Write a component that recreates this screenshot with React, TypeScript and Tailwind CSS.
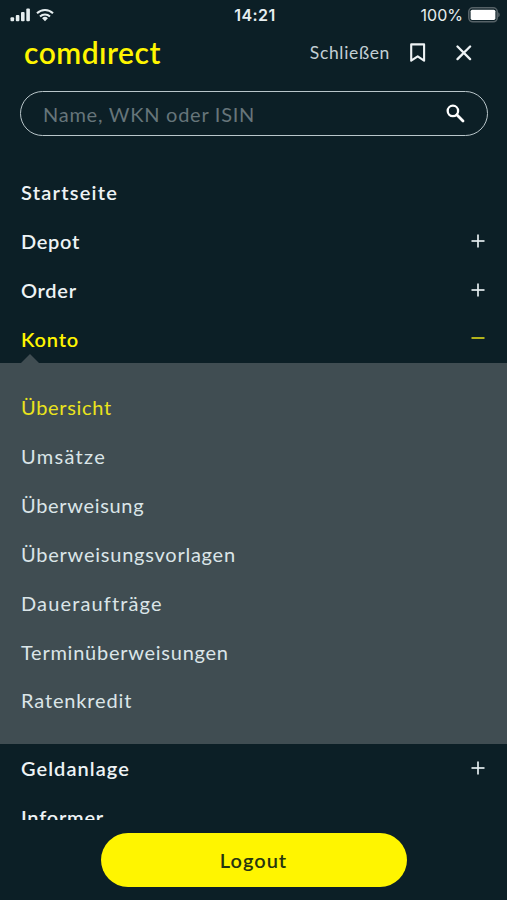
import { useState } from 'react'

type MenuItem = {
  label: string
  tracking: string
  children?: { label: string; tracking: string }[]
  expandable?: boolean
}

const MENU: MenuItem[] = [
  { label: 'Startseite', tracking: 'tracking-[1.25px]' },
  { label: 'Depot', tracking: 'tracking-[0.7px]', expandable: true },
  { label: 'Order', tracking: 'tracking-[0.7px]', expandable: true },
  {
    label: 'Konto',
    tracking: 'tracking-[0.8px]',
    expandable: true,
    children: [
      { label: 'Übersicht', tracking: 'tracking-[0.67px]' },
      { label: 'Umsätze', tracking: 'tracking-[1.3px]' },
      { label: 'Überweisung', tracking: 'tracking-[0.67px]' },
      { label: 'Überweisungsvorlagen', tracking: 'tracking-[0.76px]' },
      { label: 'Daueraufträge', tracking: 'tracking-[1.14px]' },
      { label: 'Terminüberweisungen', tracking: 'tracking-[0.74px]' },
      { label: 'Ratenkredit', tracking: 'tracking-[0.86px]' },
    ],
  },
  { label: 'Geldanlage', tracking: 'tracking-[1.05px]', expandable: true },
  { label: 'Informer', tracking: 'tracking-[0.75px]' },
]

function StatusBar() {
  return (
    <div className="h-[30px] shrink-0 grid grid-cols-3 items-center pl-[10px] pr-[7px] text-[#e6eef0] font-['Inter',sans-serif]">
      <div className="flex items-center gap-[5px]">
        <svg width="21" height="14" viewBox="0 0 21 14" fill="currentColor">
          <rect x="0.5" y="9.3" width="3.6" height="4" rx="1" />
          <rect x="5.8" y="7" width="3.6" height="6.3" rx="1" />
          <rect x="11" y="4" width="3.6" height="9.3" rx="1" />
          <rect x="16.3" y="0.6" width="3.6" height="12.7" rx="1" />
        </svg>
        <svg width="18" height="14" viewBox="0 0 18 14" fill="none" stroke="currentColor" strokeWidth="2">
          <path d="M1 5.2a11.5 11.5 0 0 1 16 0" />
          <path d="M4 8.5a7.2 7.2 0 0 1 10 0" />
          <path d="M9 13.2l-2.9-3a4.2 4.2 0 0 1 5.8 0z" fill="currentColor" stroke="none" />
        </svg>
      </div>
      <span className="text-center text-base font-semibold leading-none tracking-[0.4px]">14:21</span>
      <div className="flex items-center justify-end gap-[5px]">
        <span className="text-base leading-none">100%</span>
        <svg width="32" height="16" viewBox="0 0 32 16">
          <rect x="0.8" y="0.8" width="28.4" height="14" rx="4" fill="none" stroke="#566267" strokeWidth="1.6" />
          <rect x="2.6" y="2.7" width="24.8" height="10.2" rx="1.6" fill="#fff" />
          <path d="M30.2 5.3c2 .8 2 4.2 0 5z" fill="#566267" />
        </svg>
      </div>
    </div>
  )
}

function ToggleIcon({ open }: { open: boolean }) {
  return (
    <svg width="14" height="14" viewBox="0 0 14 14" stroke="currentColor" strokeWidth="1.7" className={open ? '-mt-px text-[#d3cf1a]' : 'text-[#e6eef0]'}>
      <path d="M0.5 7h13" />
      {!open && <path d="M7 0.5v13" />}
    </svg>
  )
}

export default function App() {
  const [openItem, setOpenItem] = useState('Konto')

  return (
    <div className="w-full h-screen flex flex-col overflow-hidden bg-[#0c1f26] font-['Lato',sans-serif]">
      <StatusBar />

      {/* Header */}
      <header className="h-[46px] shrink-0 flex items-center pl-6 pr-[35px] text-[#eef3f5]">
        <span className="text-[30px] font-semibold leading-none tracking-[0.5px] text-[#fff500] -mt-[2px]">comdırect</span>
        <button className="ml-auto text-[17.5px] leading-none tracking-[0.65px] text-[#c3cfd4]">Schließen</button>
        <svg width="18" height="20" viewBox="0 0 18 20" fill="none" stroke="currentColor" strokeWidth="2.1" className="ml-[19px] -mt-px">
          <path d="M2.2 1.4h12.9v16.3l-6.4-4.4-6.5 4.4z" strokeLinejoin="round" />
        </svg>
        <svg width="16" height="16" viewBox="0 0 16 16" fill="none" stroke="currentColor" strokeWidth="2.3" strokeLinecap="round" className="ml-[29px] -mt-px">
          <path d="M1.5 1.5l12.6 12.6M14.1 1.5L1.5 14.1" />
        </svg>
      </header>

      {/* Search */}
      <div className="shrink-0 pt-[15px] pl-5 pr-[19px]">
        <div className="h-[45px] flex items-center rounded-full border-[1.5px] border-[#b9c6ca] pl-[22px] pr-[22px]">
          <span className="flex-1 text-[20px] leading-none tracking-[0.74px] text-[#66757a]">Name, WKN oder ISIN</span>
          <svg width="19" height="19" viewBox="0 0 19 19" fill="none" stroke="#fff">
            <circle cx="6.9" cy="6.9" r="5.2" strokeWidth="2.3" />
            <path d="M10.8 10.8l6.2 6.2" strokeWidth="2.8" strokeLinecap="round" />
          </svg>
        </div>
      </div>

      {/* Menu */}
      <nav className="h-[684px] shrink-0 pt-8 overflow-hidden">
        {MENU.map((item) => {
          const open = openItem === item.label
          return (
            <div key={item.label}>
              <button
                onClick={() => setOpenItem(open ? '' : item.label)}
                className={`relative w-full h-[48.75px] flex items-center justify-between pl-[21px] pr-[22px] text-[20px] font-semibold ${open ? 'text-[#fff500]' : 'text-[#eef3f5]'}`}
              >
                <span className={`leading-none ${item.tracking}`}>{item.label}</span>
                {item.expandable && <ToggleIcon open={open} />}
                {open && item.children && (
                  <svg width="18" height="9" viewBox="0 0 18 9" className="absolute left-[21px] bottom-0">
                    <path d="M0 9l9-9 9 9z" fill="#404d52" />
                  </svg>
                )}
              </button>
              {open && item.children && (
                <ul className="h-[381px] pt-5 pl-[21px] bg-[#404d52] text-[20px]">
                  {item.children.map((child, i) => (
                    <li key={child.label} className={`h-[48.85px] flex items-center leading-none ${child.tracking} ${i === 0 ? 'text-[#ebe41c]' : 'text-[#dbe5e8]'}`}>
                      {child.label}
                    </li>
                  ))}
                </ul>
              )}
            </div>
          )
        })}
      </nav>

      {/* Logout */}
      <div className="flex justify-center pt-[13px]">
        <button className="w-[306px] h-[54px] rounded-full bg-[#fff500] text-[20px] font-semibold tracking-[1px] text-[#26350f]">
          Logout
        </button>
      </div>
    </div>
  )
}
